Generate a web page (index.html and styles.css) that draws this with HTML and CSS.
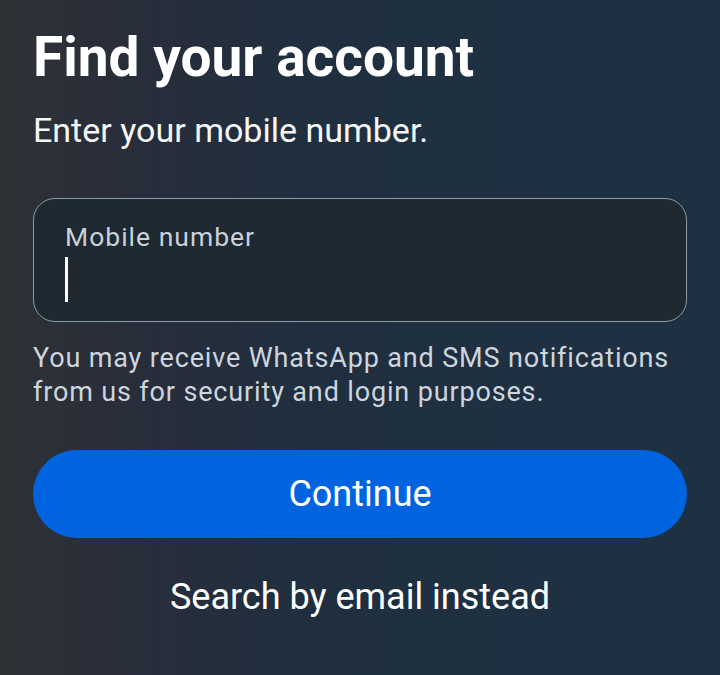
FILE: index.html
```html
<!DOCTYPE html>
<html lang="en">
<head>
<meta charset="utf-8">
<title>Find your account</title>
<link rel="stylesheet" href="styles.css">
</head>
<body>
<main class="page">
  <h1 class="title">Find your account</h1>
  <p class="subtitle">Enter your mobile number.</p>
  <div class="field">
    <span class="field-label">Mobile number</span>
    <span class="cursor"></span>
  </div>
  <p class="helper">You may receive WhatsApp and SMS notifications from us for security and login purposes.</p>
  <button class="primary">Continue</button>
  <button class="link">Search by email instead</button>
</main>
</body>
</html>
```
FILE: styles.css
```css
html, body {
  margin: 0;
  height: 100%;
}
body {
  background: linear-gradient(90deg, #2e3135 0%, #282d3a 18%, #1f2f40 45%, #1d3142 100%);
  font-family: Roboto, "Noto Sans", sans-serif;
  color: #fff;
  overflow: hidden;
}
.page {
  display: flex;
  flex-direction: column;
  padding: 24px 33px 0 33px;
}
.title {
  margin: 0;
  font-size: 55px;
  font-weight: 700;
  line-height: 66px;
  letter-spacing: 0;
}
.subtitle {
  margin: 20px 0 0 0;
  font-size: 34px;
  line-height: 40px;
  color: #f4f6f8;
}
.field {
  margin-top: 48px;
  height: 124px;
  border: 1.5px solid #8b9aa6;
  border-radius: 22px;
  background: #1e2932;
  display: flex;
  flex-direction: column;
  padding: 20px 31px 0 31px;
  box-sizing: border-box;
}
.field-label {
  font-size: 26.5px;
  letter-spacing: 1px;
  line-height: 36px;
  color: #c9d1d9;
}
.cursor {
  display: block;
  margin-top: 2px;
  width: 3px;
  height: 45px;
  background: #ffffff;
}
.helper {
  margin: 19px 0 0 0;
  font-size: 27px;
  letter-spacing: 0.85px;
  line-height: 34px;
  color: #cdd5dd;
}
.primary {
  margin-top: 41px;
  height: 88px;
  border: none;
  border-radius: 44px;
  background: #0064e0;
  color: #fff;
  font-family: inherit;
  font-size: 36px;
  padding: 0;
}
.link {
  margin-top: 35px;
  border: none;
  background: none;
  color: #fff;
  font-family: inherit;
  font-size: 36px;
  line-height: 48px;
  padding: 0;
}
```
